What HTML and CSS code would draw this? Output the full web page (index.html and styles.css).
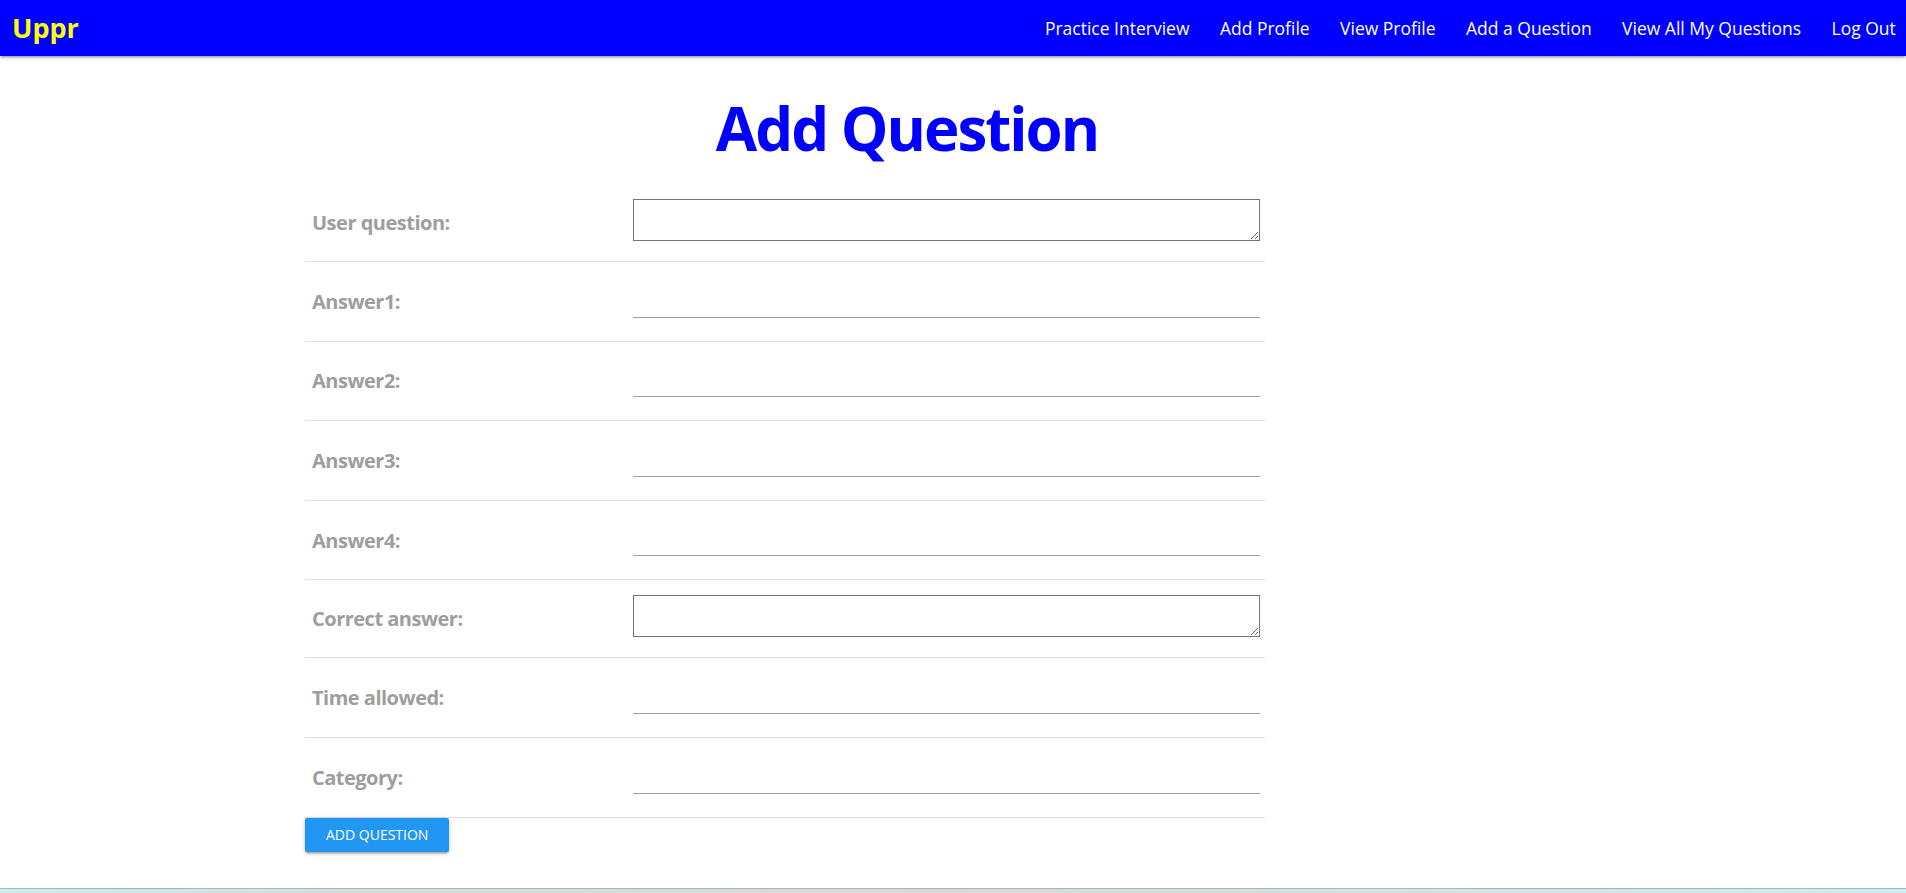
FILE: index.html
```html
<!DOCTYPE html>
<html lang="en">
<head>
<meta charset="utf-8">
<title>Uppr - Add Question</title>
<link rel="stylesheet" href="styles.css">
</head>
<body>
<nav class="nav">
  <a class="brand" href="#">Uppr</a>
  <ul class="nav-links">
    <li><a href="#">Practice Interview</a></li>
    <li><a href="#">Add Profile</a></li>
    <li><a href="#">View Profile</a></li>
    <li><a href="#">Add a Question</a></li>
    <li><a href="#">View All My Questions</a></li>
    <li><a href="#">Log Out</a></li>
  </ul>
</nav>
<main class="main">
  <h1 class="title">Add Question</h1>
  <form class="qform">
    <table class="qtable">
      <tbody>
        <tr><td class="label">User question:</td><td class="field"><textarea class="ta"></textarea></td></tr>
        <tr><td class="label">Answer1:</td><td class="field"><input class="inp" type="text"></td></tr>
        <tr><td class="label">Answer2:</td><td class="field"><input class="inp" type="text"></td></tr>
        <tr><td class="label">Answer3:</td><td class="field"><input class="inp" type="text"></td></tr>
        <tr><td class="label">Answer4:</td><td class="field"><input class="inp" type="text"></td></tr>
        <tr><td class="label">Correct answer:</td><td class="field"><textarea class="ta"></textarea></td></tr>
        <tr><td class="label">Time allowed:</td><td class="field"><input class="inp" type="text"></td></tr>
        <tr><td class="label">Category:</td><td class="field"><input class="inp" type="text"></td></tr>
      </tbody>
    </table>
    <button class="btn" type="button">Add Question</button>
  </form>
</main>
<footer class="taskbar"></footer>
</body>
</html>
```
FILE: styles.css
```css
html, body {
  margin: 0;
  padding: 0;
}
body {
  font-family: "Open Sans", "Liberation Sans", sans-serif;
  background: #ffffff;
  min-height: 100vh;
  display: flex;
  flex-direction: column;
}
.nav {
  height: 56px;
  background: #0000ff;
  display: flex;
  align-items: center;
  justify-content: space-between;
  box-shadow: 0 2px 2px 0 rgba(0,0,0,.14), 0 3px 1px -2px rgba(0,0,0,.12), 0 1px 5px 0 rgba(0,0,0,.2);
  position: relative;
  z-index: 2;
}
.brand {
  color: #ffff00;
  font-weight: 700;
  font-size: 27px;
  text-decoration: none;
  padding-left: 12px;
  line-height: 56px;
}
.nav-links {
  list-style: none;
  margin: 0 -5px 0 0;
  padding: 0;
  display: flex;
}
.nav-links a {
  display: block;
  color: #ffffff;
  text-decoration: none;
  font-size: 17.5px;
  line-height: 56px;
  padding: 0 15.2px;
}
.main {
  margin-left: 305px;
  width: 1204px;
}
.title {
  margin: 35px 0 19px;
  text-align: center;
  color: #0000ff;
  font-size: 60px;
  line-height: 74px;
  font-weight: 700;
  letter-spacing: -2px;
}
.qtable {
  width: 960px;
  border-collapse: collapse;
}
.qtable tr {
  border-bottom: 1px solid #e0e0e0;
}
.qtable td {
  padding: 15px 5px;
  vertical-align: middle;
}
.label {
  width: 311px;
  color: #9e9e9e;
  font-weight: 700;
  font-size: 20px;
  padding-left: 7px !important;
  letter-spacing: -0.5px;
}
.ta {
  display: block;
  box-sizing: border-box;
  width: 100%;
  height: 42px;
  margin: 0 0 5px;
  border: 1px solid #767676;
  font-family: inherit;
}
.inp {
  display: block;
  box-sizing: content-box;
  width: 100%;
  height: 39.6px;
  margin: 0 0 8px;
  padding: 0;
  border: none;
  border-bottom: 1px solid #9e9e9e;
  outline: none;
  background: transparent;
  font-family: inherit;
  font-size: 16px;
}
.btn {
  display: block;
  height: 34px;
  padding: 0 21px;
  border: none;
  border-radius: 2px;
  background: #2196f3;
  color: #ffffff;
  font-family: inherit;
  font-size: 14px;
  text-transform: uppercase;
  box-shadow: 0 2px 2px 0 rgba(0,0,0,.14), 0 3px 1px -2px rgba(0,0,0,.12), 0 1px 5px 0 rgba(0,0,0,.2);
  cursor: pointer;
}
.taskbar {
  margin-top: auto;
  height: 4px;
  border-top: 1px solid #a9b4b4;
  background: linear-gradient(to right, #c8efec 0%, #d6dcdc 20%, #d8d8d8 50%, #d4e4e4 80%, #c9eff0 100%);
}
```
